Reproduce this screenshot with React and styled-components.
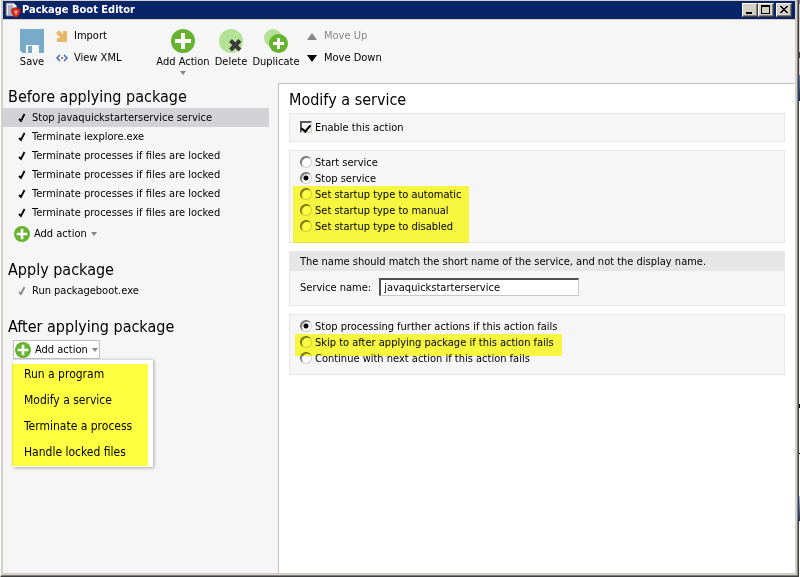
import React, { useState } from "react";
import styled, { createGlobalStyle, css } from "styled-components";

const App = () => {
  const [mode, setMode] = useState("stop");
  const [onFail, setOnFail] = useState("halt");
  const [selected, setSelected] = useState(0);

  return (
    <Desktop>
      <GlobalStyle />
      <Frame>
        <TitleBar>
          <AppIcon />
          <Title>Package Boot Editor</Title>
          <WindowButton aria-label="Minimize">
            <svg width="10" height="10" shapeRendering="crispEdges">
              <path d="M1 7h6v2h-6z" />
            </svg>
          </WindowButton>
          <WindowButton aria-label="Maximize">
            <svg width="10" height="10" shapeRendering="crispEdges">
              <path fillRule="evenodd" d="M0 0h9v9h-9zM1 2v6h7v-6z" />
            </svg>
          </WindowButton>
          <WindowButton aria-label="Close" $apart>
            <svg width="10" height="10" shapeRendering="crispEdges">
              <path d="M1 1h2v1h1v1h2v-1h1v-1h2v1h-1v1h-1v1h-1v1h1v1h1v1h1v1h-2v-1h-1v-1h-2v1h-1v1h-2v-1h1v-1h1v-1h1v-1h-1v-1h-1v-1h-1z" />
            </svg>
          </WindowButton>
        </TitleBar>

        <Toolbar>
          <BigButton $width={36}>
            <SaveIcon />
            Save
          </BigButton>
          <ToolStack $width={104}>
            <SmallButton>
              <ImportIcon />
              Import
            </SmallButton>
            <SmallButton>
              <XmlIcon />
              View XML
            </SmallButton>
          </ToolStack>
          <BigButton $width={58}>
            <PlusIcon size={24} />
            Add Action
            <Caret />
          </BigButton>
          <BigButton $width={38}>
            <DeleteIcon />
            Delete
          </BigButton>
          <BigButton $width={52}>
            <DuplicateIcon />
            Duplicate
          </BigButton>
          <ToolStack $indent>
            <SmallButton disabled>
              <svg width="12" height="12">
                <path d="M1 10L6 3L11 10z" fill="#868686" />
              </svg>
              Move Up
            </SmallButton>
            <SmallButton>
              <svg width="12" height="12">
                <path d="M1 3L11 3L6 10z" fill="#000" />
              </svg>
              Move Down
            </SmallButton>
          </ToolStack>
        </Toolbar>

        <Body>
          <Sidebar>
            <section>
              <Heading>Before applying package</Heading>
              <ActionList>
                {beforeActions.map((name, i) => (
                  <li key={i}>
                    <ActionRow
                      $active={i === selected}
                      onClick={() => setSelected(i)}
                    >
                      <CheckIcon color="#000" />
                      {name}
                    </ActionRow>
                  </li>
                ))}
              </ActionList>
              <AddAction>
                <AddButton>
                  <PlusIcon size={16} />
                  Add action
                  <Caret />
                </AddButton>
              </AddAction>
            </section>

            <section>
              <Heading>Apply package</Heading>
              <ActionList>
                <li>
                  <ActionRow>
                    <CheckIcon color="#8a8a8a" />
                    Run packageboot.exe
                  </ActionRow>
                </li>
              </ActionList>
            </section>

            <section>
              <Heading>After applying package</Heading>
              <AddAction>
                <AddButton $open aria-haspopup="menu" aria-expanded="true">
                  <PlusIcon size={16} />
                  Add action
                  <Caret />
                </AddButton>
                <Menu role="menu">
                  {menuItems.map(item => (
                    <MenuItem key={item} role="menuitem">
                      {item}
                    </MenuItem>
                  ))}
                </Menu>
              </AddAction>
            </section>
          </Sidebar>

          <Main>
            <Heading $main>Modify a service</Heading>

            <Panel $kind="check">
              <Option>
                <Checkbox type="checkbox" defaultChecked />
                <OptionText>Enable this action</OptionText>
              </Option>
            </Panel>

            <Panel>
              <Radio name="mode" value="start" current={mode} onPick={setMode}>
                Start service
              </Radio>
              <Radio name="mode" value="stop" current={mode} onPick={setMode}>
                Stop service
              </Radio>
              <MarkedGroup>
                {startupTypes.map(type => (
                  <Radio
                    key={type}
                    name="mode"
                    value={type}
                    current={mode}
                    onPick={setMode}
                  >
                    Set startup type to {type}
                  </Radio>
                ))}
              </MarkedGroup>
            </Panel>

            <Panel $kind="field">
              <Note>
                The name should match the short name of the service, and not
                the display name.
              </Note>
              <Field>
                <FieldLabel htmlFor="service">Service name:</FieldLabel>
                <TextInput id="service" defaultValue="javaquickstarterservice" />
              </Field>
            </Panel>

            <Panel>
              <Radio name="fail" value="halt" current={onFail} onPick={setOnFail}>
                Stop processing further actions if this action fails
              </Radio>
              <MarkedGroup $wide>
                <Radio name="fail" value="skip" current={onFail} onPick={setOnFail}>
                  Skip to after applying package if this action fails
                </Radio>
              </MarkedGroup>
              <Radio name="fail" value="next" current={onFail} onPick={setOnFail}>
                Continue with next action if this action fails
              </Radio>
            </Panel>
          </Main>
        </Body>
      </Frame>
    </Desktop>
  );
};

const beforeActions = [
  "Stop javaquickstarterservice service",
  "Terminate iexplore.exe",
  "Terminate processes if files are locked",
  "Terminate processes if files are locked",
  "Terminate processes if files are locked",
  "Terminate processes if files are locked"
];

const menuItems = [
  "Run a program",
  "Modify a service",
  "Terminate a process",
  "Handle locked files"
];

const startupTypes = ["automatic", "manual", "disabled"];

const Radio = ({ name, value, current, onPick, children }) => (
  <Option>
    <RadioInput
      type="radio"
      name={name}
      checked={current === value}
      onChange={() => onPick(value)}
    />
    <OptionText>{children}</OptionText>
  </Option>
);

const AppIcon = () => (
  <svg width="16" height="16" viewBox="0 0 16 16">
    <path d="M1 1h8l3 3v10h-11z" fill="#e9e9ef" stroke="#55597a" />
    <path d="M3 4h5M3 6h7M3 8h5M3 10h4M3 12h4" stroke="#777a92" />
    <path
      d="M11 5.500c1.500 1 2.500 1.300 4.500 1.500c0 4-1 6.500-4.500 8.500c-3.500-2-4.500-4.500-4.500-8.500c2-.2 3-.5 4.500-1.500z"
      fill="#d8281c"
      stroke="#8f1712"
      strokeWidth=".7"
    />
    <path d="M11 8v5M9 10h4" stroke="#f4b6a8" strokeWidth="1.200" />
  </svg>
);

const SaveIcon = () => (
  <svg width="24" height="24" viewBox="0 0 24 24" shapeRendering="crispEdges">
    <path
      fill="#79aaca"
      fillRule="evenodd"
      d="M0 0h24v24h-5v-8h-13v8h-4l-2-2z"
    />
    <path fill="#79aaca" d="M8 17h4v7h-4z" />
  </svg>
);

const ImportIcon = () => (
  <svg width="12" height="12" viewBox="0 0 12 12">
    <path d="M0 3L3 0L7 4.500V1H11V12H1V8H4.500z" fill="#e8b764" />
  </svg>
);

const XmlIcon = () => (
  <svg width="12" height="12" viewBox="0 0 12 12" fill="none">
    <path d="M4 3L1 6L4 9M8 3L11 6L8 9" stroke="#2f6fc4" strokeWidth="1.500" />
    <rect x="5" y="5" width="2" height="2" fill="#e0604c" />
  </svg>
);

const PlusIcon = ({ size }) => (
  <svg width={size} height={size} viewBox="0 0 24 24">
    <circle cx="12" cy="12" r="12" fill="#65b32e" />
    <path d="M12 4v16M4 12h16" stroke="#fff" strokeWidth="4" />
  </svg>
);

const DeleteIcon = () => (
  <svg width="24" height="24" viewBox="0 0 24 24">
    <circle cx="12" cy="12" r="12" fill="#b3e294" />
    <path d="M11.500 11.500L21 21M21 11.500L11.500 21" stroke="#3c3c3c" strokeWidth="4" />
  </svg>
);

const DuplicateIcon = () => (
  <svg width="24" height="24" viewBox="0 0 24 24">
    <circle cx="9" cy="9" r="9" fill="#b3e294" />
    <circle cx="14.500" cy="14.500" r="9.500" fill="#65b32e" />
    <path d="M14.500 9v11M9 14.500h11" stroke="#fff" strokeWidth="3" />
  </svg>
);

const CheckIcon = ({ color }) => (
  <svg width="8" height="10" viewBox="0 0 8 10" fill="none">
    <path d="M1 6L3 8L6.500 1" stroke={color} strokeWidth="1.800" />
  </svg>
);

const Caret = () => (
  <svg width="6" height="4" viewBox="0 0 6 4">
    <path d="M0 0h6l-3 4z" fill="#868686" />
  </svg>
);

const GlobalStyle = createGlobalStyle`
  * {
    box-sizing: border-box;
  }

  body {
    margin: 0;
    font-family: "DejaVu Sans Condensed", "DejaVu Sans", sans-serif;
    font-size: 11px;
    line-height: 16px;
    color: #000;
  }

  button, input {
    font: inherit;
    color: inherit;
  }

  button {
    padding: 0;
    border: 0;
    background: none;
    white-space: nowrap;
  }

  svg {
    flex: none;
  }
`;

const Desktop = styled.div`
  display: flex;
  min-height: 100vh;
  padding-right: 1px;
  background: linear-gradient(
    #808080 0 4px, #d4d0c8 4px 52px, #404040 52px 58px, #d4d0c8 58px 75px,
    #5b7fc0 75px, #0a246a 101px, #fff 101px 404px, #000 404px 408px,
    #fff 408px 453px, #000 453px 454px, #fff 454px 496px,
    #a6caf0 496px, #0a246a 521px, #fff 521px
  );
`;

const Frame = styled.div`
  display: flex;
  flex-direction: column;
  flex: 1;
  min-width: 0;
  padding: 1px 3px 3px 2px;
  border-left: 1px solid #fff;
  border-right: 1px solid #404040;
  border-bottom: 1px solid #404040;
  background: #d4d0c8;
  box-shadow: inset -1px -1px #808080;
`;

const TitleBar = styled.header`
  display: flex;
  align-items: center;
  height: 18px;
  margin-bottom: 1px;
  padding: 0 3px 0 2px;
  background: #0a246a;
`;

const Title = styled.h1`
  flex: 1;
  margin: 0 0 0 1px;
  font-size: 11px;
  font-weight: bold;
  color: #fff;
`;

const WindowButton = styled.button`
  display: flex;
  align-items: center;
  justify-content: center;
  width: 16px;
  height: 14px;
  margin-left: ${p => (p.$apart ? 2 : 0)}px;
  border: 1px solid;
  border-color: #fff #404040 #404040 #fff;
  background: #d4d0c8;
  box-shadow: inset -1px -1px #808080;
`;

const Toolbar = styled.div`
  display: flex;
  align-items: flex-start;
  height: 63px;
  padding: 4px 11px 0;
  background: #f6f6f6;
`;

const BigButton = styled.button`
  display: flex;
  flex-direction: column;
  align-items: center;
  gap: 2px;
  width: ${p => p.$width}px;
  padding-top: 5px;
  line-height: 14px;
`;

const ToolStack = styled.div`
  display: flex;
  flex-direction: column;
  width: ${p => (p.$width ? `${p.$width}px` : "auto")};
  padding-top: 1px;
  padding-left: ${p => (p.$indent ? 4 : 6)}px;
`;

const SmallButton = styled.button`
  display: flex;
  align-items: center;
  gap: 6px;
  height: 22px;

  &:disabled {
    color: #868686;
  }
`;

const Body = styled.div`
  display: flex;
  flex: 1;
  background: #f6f6f6;
`;

const Sidebar = styled.nav`
  display: flex;
  flex-direction: column;
  gap: 14px;
  flex: 0 0 275px;
  padding-top: 1px;
`;

const Heading = styled.h2`
  margin: ${p => (p.$main ? "3px 0 2px" : "0 0 0 5px")};
  padding-top: 2px;
  font-size: 16px;
  font-weight: normal;
  line-height: 22px;
`;

const ActionList = styled.ul`
  margin: 0 9px 0 0;
  padding: 0;
  list-style: none;
`;

const ActionRow = styled.button`
  display: flex;
  align-items: center;
  gap: 6px;
  width: 100%;
  height: 19px;
  padding-left: 15px;
  background: ${p => (p.$active ? "#d3d2d4" : "none")};
`;

const AddAction = styled.div`
  position: relative;
  width: fit-content;
  margin: 2px 0 0 10px;
`;

const AddButton = styled.button`
  display: flex;
  align-items: center;
  gap: 4px;
  height: 19px;
  padding: 0 1px 0 0;
  border: 1px solid transparent;

  ${p =>
    p.$open &&
    css`
      padding: 0 1px;
      border-color: #c0c0c0;
      background: #fff;
    `}
`;

const marker = css`
  &::after {
    content: "";
    position: absolute;
    background: #ffff42;
    mix-blend-mode: multiply;
    pointer-events: none;
  }
`;

const Menu = styled.div`
  position: absolute;
  top: 100%;
  left: 0;
  display: flex;
  flex-direction: column;
  width: 140px;
  padding: 1px 0 2px;
  border-top: 1px solid #dcdcdc;
  background: #fff;
  box-shadow: 1px 1px 3px #a8a8a8;

  ${marker}

  &::after {
    inset: 4px 5px 1px -1px;
  }
`;

const MenuItem = styled.button`
  height: 26px;
  padding-left: 11px;
  font-size: 12px;
  text-align: left;
`;

const Main = styled.main`
  display: flex;
  flex-direction: column;
  flex: 1;
  min-width: 0;
  padding: 0 10px;
  border-top: 1px solid #c0c0c0;
  border-left: 1px solid #c0c0c0;
  background: #fff;
`;

const panelPadding = {
  check: "5px 10px 6px",
  field: "0"
};

const Panel = styled.div`
  display: flex;
  flex-direction: column;
  align-items: ${p => (p.$kind === "field" ? "stretch" : "flex-start")};
  padding: ${p => panelPadding[p.$kind] || "3px 10px 8px"};
  border: 1px solid #e6e6e6;
  background: #f6f6f6;

  & + & {
    margin-top: 8px;
  }
`;

const Option = styled.label`
  display: flex;
  align-items: center;
  gap: 3px;
  height: 16px;
  white-space: nowrap;
`;

const OptionText = styled.span`
  padding-top: 2px;
`;

const MarkedGroup = styled.div`
  position: relative;

  ${marker}

  &::after {
    inset: ${p => (p.$wide ? "0 -8px -6px -5px" : "0 -7px -9px -7px")};
  }
`;

const Checkbox = styled.input`
  appearance: none;
  width: 12px;
  height: 12px;
  margin: 0;
  border: 2px solid;
  border-color: #555 #dedbd5 #dedbd5 #555;
  background: #fff;

  &:checked::before {
    content: "";
    display: block;
    width: 4px;
    height: 7px;
    margin: 0 auto;
    border: solid #000;
    border-width: 0 2px 2px 0;
    transform: rotate(40deg);
  }
`;

const RadioInput = styled.input`
  appearance: none;
  width: 12px;
  height: 12px;
  margin: 0;
  border: 1px solid;
  border-color: #6a6a6a #d0cec8 #d0cec8 #6a6a6a;
  border-radius: 50%;
  background: #fff;
  box-shadow: inset 1px 1px #808080;

  &:checked {
    background: radial-gradient(circle, #000 2px, #fff 3px);
  }
`;

const Note = styled.p`
  margin: 0;
  padding: 0 10px;
  line-height: 19px;
  background: #e6e6e6;
`;

const Field = styled.div`
  display: flex;
  align-items: center;
  gap: 8px;
  padding: 7px 10px 9px;
`;

const FieldLabel = styled.label`
  padding-top: 2px;
  white-space: nowrap;
`;

const TextInput = styled.input`
  width: 200px;
  height: 18px;
  padding: 0 3px;
  border: solid;
  border-width: 2px 1px 1px 2px;
  border-color: #505050 #c8c8c8 #c8c8c8 #505050;
  background: #fff;
`;

export default App;
